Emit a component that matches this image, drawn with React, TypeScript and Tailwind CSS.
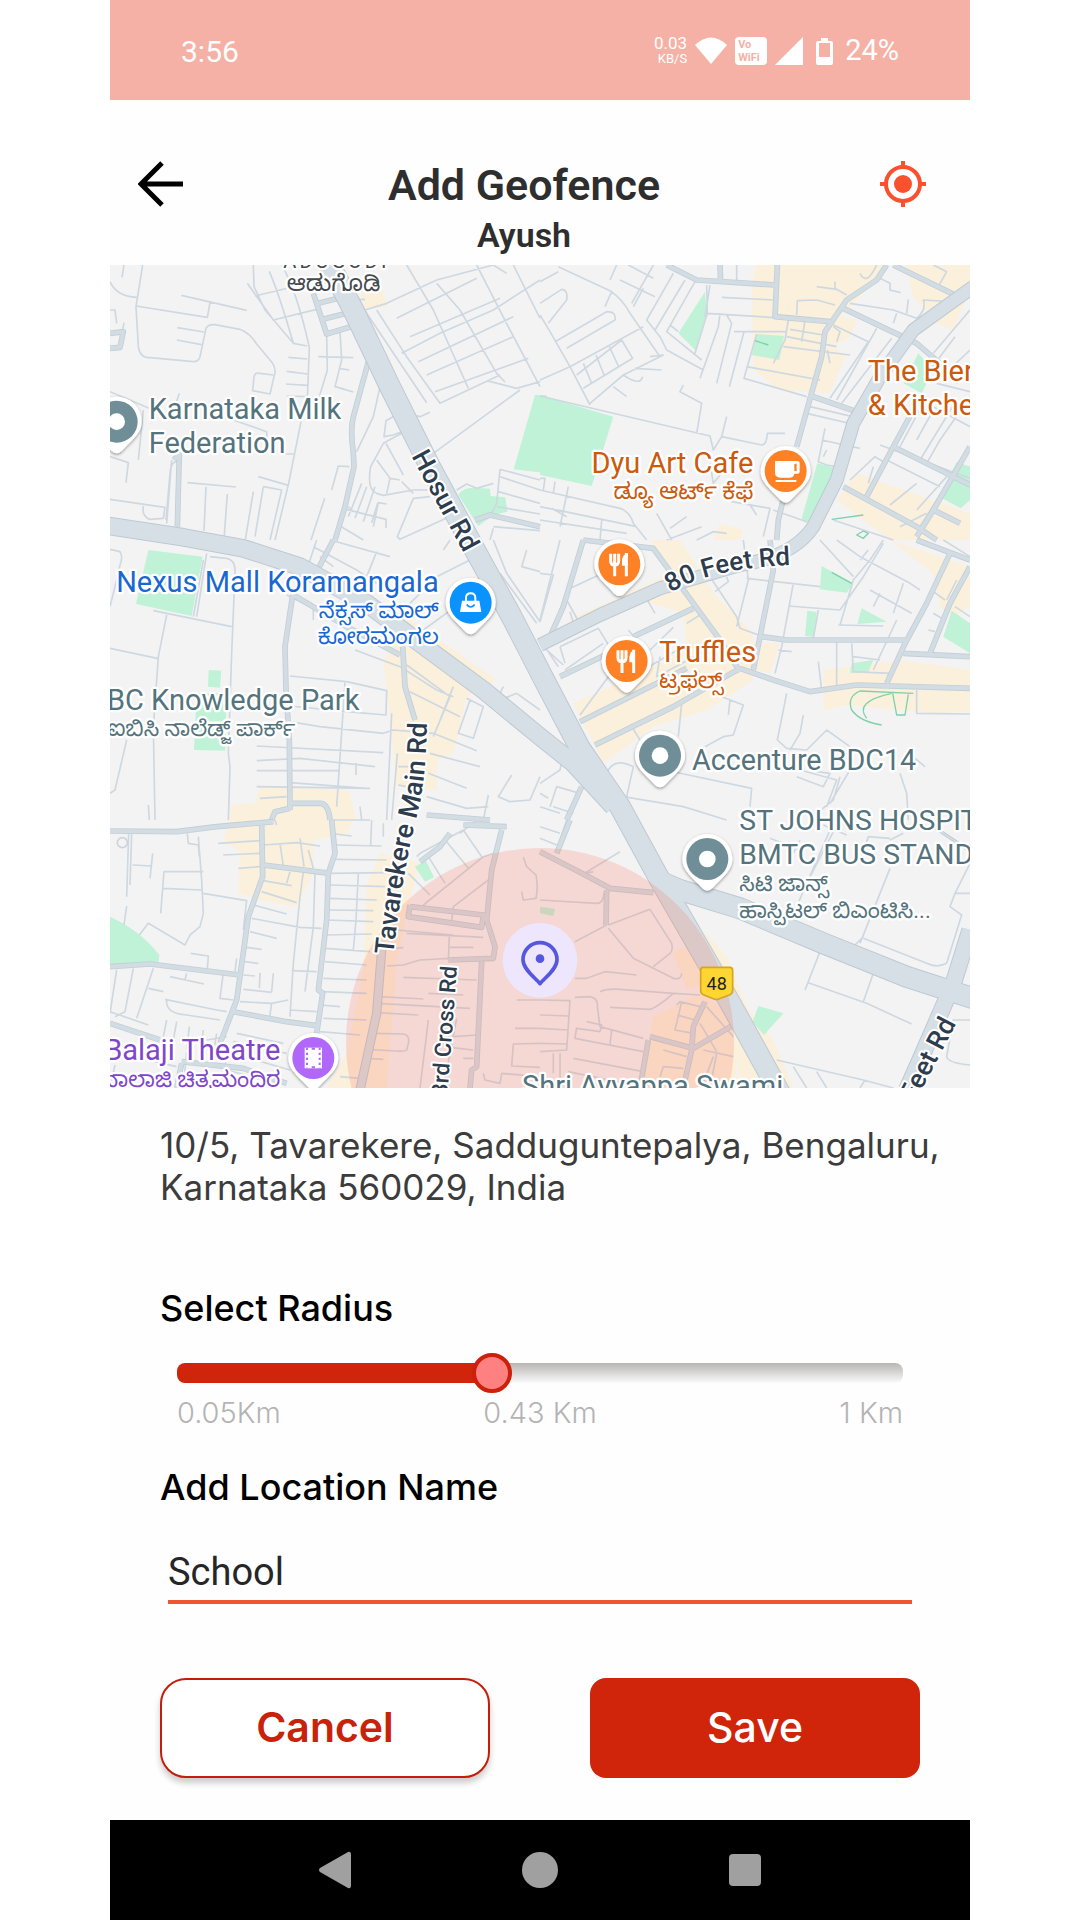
import React, { useState } from "react";

// Map drawing units are a third of a pixel, split into tiles of 1320 x 840.
interface Tile {
  x: number;
  y: number;
  sand: string[];
  parks: string[];
  minor: string;
  mid: string;
}

interface PinProps {
  x: number;
  y: number;
  color: string;
  children?: React.ReactNode;
}

interface LabelProps {
  x: number;
  y: number;
  color: string;
  size?: number;
  end?: boolean;
  children: React.ReactNode;
}

const TILES: Tile[] = [
  {
    x: 0,
    y: 0,
    sand: ["M780 80L850 90L860 140L790 150Z"],
    parks: [
      "M1305 405L1340 405L1340 640L1241 628Z",
      "M1075 705Q1090 680 1130 684L1170 686L1172 708L1216 712L1222 755L1180 765L1135 798Z",
    ],
    minor:
      "M72 15L66 52M30 65Q50 110 110 112M30 150L45 150L50 190M72 188L66 220M30 395L160 450M30 590L85 608L78 668M130 450L115 600M244 106L440 151M330 128L322 172L108 138M128 15L108 140L115 260Q120 295 150 293L280 305Q296 305 300 290L318 205Q325 192 345 194L420 208Q450 220 470 252L518 310Q530 330 522 350L510 402L458 392L462 350Q465 336 480 340L520 345M232 203L312 216M230 240L305 254M460 15L462 80L495 150L580 250L622 258M508 34Q540 110 580 250M545 15Q590 90 628 262L622 420M442 70L520 180L650 148M465 108L590 78M565 292L622 297M560 334L622 342M558 372L622 376M560 408L622 410M680 225L682 330L655 420M720 215L725 300L705 380L760 396M655 290L760 293M716 325L748 330M705 380L735 388M640 410L606 470L566 670L525 840M550 582L580 582M238 400L228 430M400 480L500 515L502 570M240 590L232 800M215 600L200 790M230 605Q212 606 210 640L198 780M262 668L408 681M318 680L312 812M382 702L372 838M460 695L436 838M475 650L565 676M490 680L545 690L510 840M490 680L465 830M30 718L195 742L190 775L150 778Q125 770 130 738M674 715L633 840M748 620L715 618L695 690M745 740L760 755M785 670L745 770M800 680L765 775M825 680L790 785M833 730L815 788M860 732L835 728L820 800M738 748L858 778L858 804M724 800L790 840M840 380L820 470L770 575M990 457L960 470L900 458L858 482L852 530L880 525L912 512M908 518L850 550L812 620Q800 690 830 700L850 706L940 690L990 690M830 600L870 655L900 660M858 550L910 645M870 655L860 700M905 665L940 700M990 710L940 715L892 830L900 838L1060 765M795 152L980 428M830 150L920 290L1020 430L1200 345M905 280L1020 220L1180 150L1320 60M760 120L795 118M795 150L860 130L1010 60L1180 15M1010 70L1080 150L1190 340L1215 366M920 15L1000 150L1105 385M1130 15L1230 210L1320 380M1240 15L1320 175M890 175L1130 55M930 230L1200 115M955 305L1240 170M980 345L1240 230M1005 395L1285 295M1160 362L1250 385L1320 365M1260 390L1000 580M1180 15L1220 40M1180 670L1130 685L1100 672L1070 690M1200 628L1190 730L1170 770M1200 628L1320 660M1200 650L1320 690M1195 695L1320 730M1190 740L1320 762M1180 800L1320 812M1180 805L1170 840",
    mid: "M640 100L680 222L760 198M655 130L715 115M668 178L740 160M805 305L760 470Q750 510 760 580L762 620L735 740L705 840M1125 780L1170 765L1320 800M30 265L60 262L70 215L30 220M222 600L238 580L232 800",
  },
  {
    x: 1320,
    y: 0,
    sand: [
      "M648 15L1035 15L990 80L900 170L950 180L930 230L880 260L915 290L870 400L720 390L640 330L635 90Z",
      "M1100 15L1290 15L1290 90L1240 210L1190 190L1120 110Z",
      "M950 640L1290 760L1290 840L1050 840L890 720Z",
      "M540 790L610 810L600 840L520 840Z",
      "M1240 15L1290 15L1290 60Z",
    ],
    parks: [
      "M0 405L220 470L155 678L0 645Z",
      "M495 95L500 160L468 272L415 220Z",
      "M650 222L732 228L718 300L635 285Z",
      "M832 610L890 625L848 720L805 795L785 775Z",
      "M1250 605L1290 620L1290 720L1262 745L1198 710Z",
      "M1135 280L1180 330L1145 400L1090 370Z",
    ],
    minor:
      "M0 65L55 35M55 20L210 92Q250 120 270 160L360 290M0 165L30 215L90 320L150 435M0 130L65 88Q85 90 80 120L25 190M45 245L200 155Q230 155 225 180L80 265M0 360L90 320L310 200M110 345L245 240L278 295L130 385M130 310L155 370M168 285L192 345M208 260L235 318M330 290L370 285L250 345L150 430M285 325L365 330M250 345Q300 380 308 350M220 380L260 410M210 92L215 95L195 140M230 15L210 60M240 60L345 110M310 85L280 140M265 15L340 55M340 15L275 130M400 40L320 180L360 230L380 270L490 330M435 60L345 210M465 65L380 215L485 300M390 195L415 215M500 75L502 160L465 280M510 75L495 170M540 160L535 200L480 355M560 165L575 190L530 370M612 215L568 380M582 215L740 215M590 15L590 65M500 160L740 175M545 112L700 120M650 222L612 355L800 410M745 180L735 240L700 310M740 230L890 260M620 320L840 360M730 260L930 285M795 180L785 245M750 208L850 225M862 270L870 310M770 165L772 122L830 120L885 135M830 80L890 88L920 105M885 65L885 90M880 200L900 215L890 245M880 195L985 245L870 415M1010 205L890 420M1055 235L905 430M1125 195L1100 225M960 40Q980 80 1010 15M1010 50L1050 70L1050 90L1082 98M930 130L1060 150L1130 175Q1160 150 1150 120L1230 125M1105 118L1100 160M1070 160L1060 190M1180 15L1220 35L1195 80M1290 150L1180 280M1245 230L1155 350M1290 270L1210 345M1290 330L1250 370M1290 395L1190 370M1290 500L1180 440M1250 420L1140 600M1160 410L1080 560M1280 425L1200 540L1160 610M1180 450L1130 540M0 408L510 528L520 570L545 530L665 555Q680 555 682 520L735 520M470 520L485 430L420 395L430 375M545 530L560 470M510 610L520 670L545 640M0 655L15 655L10 690M45 665L40 700M85 680L60 800M0 690L240 745Q270 755 280 790L320 840M35 745L80 770M0 740L75 755L290 800M185 780L180 840M0 780L260 820M350 760L395 840M440 770L390 805M485 800L380 840M560 820L520 815L470 840M575 725L690 745L670 830M630 735L650 765M800 460L950 495M810 440L960 475M855 505L835 605L860 615L890 620M845 540L960 565M860 570L850 590M930 660L1005 590L1030 605M1000 620L985 670M1020 555L1290 655M1040 600L1200 680M1130 670L1050 735M1200 705L1140 800M1220 650L1130 750M1160 760L1080 800M880 780L1060 840M700 750L800 785",
    mid: "M540 15L542 65M380 15L470 60L705 75M712 15L705 170L870 185M1040 15L1010 60L920 120L855 215L845 290L770 560M1060 15L1255 110M910 145L1130 250L1200 310M805 405L970 462M760 590L715 780L710 840M910 680L1130 800L1190 840M1120 450L1060 560L980 710M1060 560L1290 675M1290 560L1180 750L1130 830M1180 750L1260 790",
  },
  {
    x: 0,
    y: 840,
    sand: [
      "M920 230L1190 420L1100 470L1060 640L1010 660L1010 750L890 740L865 480L850 370Z",
      "M480 740L745 750L770 840L390 840L390 795L465 790Z",
    ],
    parks: [
      "M145 30L308 50L275 228L108 192Z",
      "M326 390L364 392L360 443L324 440Z",
      "M290 460L380 460L376 632L282 630Z",
    ],
    minor:
      "M30 28L60 35Q70 50 60 75L50 120L30 200M320 40L290 230M330 50L380 55Q408 60 405 100L395 340L385 640L390 680L385 840M310 60L280 230M160 212L395 260M200 225L175 350L160 560L165 840M30 325L172 355M80 600L45 750L30 760M560 165L640 205L640 240M620 90L650 0M690 0L870 50M640 20L770 90L830 130M660 50L700 80M830 35L800 110M1120 55L1010 110M1180 0L1220 100L1320 245M1280 30L1265 80L1320 95M1030 30L1050 0M1200 100L1310 250M930 190L960 160M970 270L1080 190M765 330L900 380L1010 450L1060 470M570 408L740 425L860 452L858 525L740 515L570 498M735 428L710 800M570 545L660 560L850 580L880 570L1000 580L1130 632M920 375L1050 470L1000 590M930 455L1080 530M1110 480L1075 580L1120 595L1150 500L1100 475M1060 440L1020 540M470 618L850 638M470 662L600 655L825 680M470 692L720 692M768 670L768 705M470 740L810 745M480 775L560 770M570 728L800 745M875 520L860 840M892 640L875 840M780 800L785 840M990 640L1140 680M985 700L1100 745M895 680L925 680M895 735L920 740M980 770L1100 805L1165 800M1235 705L1195 770L1230 785L1290 780L1320 710M1165 765L1150 840M1200 480L1250 460L1320 510M1235 500L1320 560M1210 440L1190 480M145 795L148 840",
    mid: "M578 165L555 320L558 450L568 600L570 810M908 320L915 440L945 540M515 840L525 815L570 805M570 790L660 790Q685 790 690 840M655 85L700 0M580 165L740 260L900 345M980 825L1170 840",
  },
  {
    x: 1320,
    y: 840,
    sand: [
      "M330 0L420 0L520 160L640 280L640 420L500 510L340 560L190 670L100 490L300 400L440 330L430 220L300 180L60 250L220 180L390 100Z",
      "M640 310L720 310L690 400L650 390Z",
      "M850 390L1080 360L1290 390L1290 515L1180 520L920 495L850 510Z",
      "M1050 0L1290 80L1290 200L1240 230L1200 200L1180 100Z",
    ],
    parks: [
      "M845 78L940 130L920 158L840 148Z",
      "M802 212L830 216L822 290L795 288Z",
      "M965 205L1040 245L952 252Z",
      "M1235 212L1290 250L1290 340L1210 290Z",
      "M935 370L1000 360L985 395L930 400Z",
    ],
    minor:
      "M0 100L40 105L0 245M60 0L30 120L0 240M130 0L40 270M80 180L130 270M80 150L220 85M90 215L110 280M60 320L175 265L215 330M60 320L75 370M15 325L70 375M25 335L55 380M310 160L345 220M265 270L290 300M400 262L330 330M430 320L240 430M440 250L480 225M360 350L350 410L520 320M250 350L120 525M190 310L75 390M510 110L590 230L600 265L670 290M525 155L565 125L560 110M590 260L625 120L610 0M620 115L840 140M760 130L725 320L705 400M745 198L900 210M835 210L820 295M900 255L940 120L990 60L1030 0M895 255L1030 258M890 0L960 50L1110 130L1140 150M840 0L940 110M990 150L1115 220M960 60L985 30M1020 160L1000 200M1090 130L1060 220M1070 240L1000 390M1030 10L970 110L900 210M935 310L940 395L1050 400M890 305L890 440M940 350L1020 360M715 330L755 335M835 365L845 450M1130 450L1130 520L1290 522M1180 155L1215 180M1180 220L1205 235M1210 0L1290 50M1165 270L1185 275M1250 120L1220 180M1245 200L1290 230M740 460L712 600L740 625L800 630L860 570L930 620M790 525L780 580L750 630M545 470L610 495L580 585L550 590L495 620M570 480L565 525M425 490L415 590M275 560L300 600M260 770L280 680Q220 650 200 700M375 690L635 745L630 800M250 770L430 800L560 840M0 730L60 690L70 640M30 800L50 740L120 760M0 800L60 820M0 760L25 775M770 710L850 740L870 700L830 695M780 690L890 720L860 800M870 790L930 690M1080 700L1100 760L1105 840M1130 680L1125 655L1155 680M900 710L880 780L830 820M40 800L100 820",
    mid: "M30 290L70 200L130 0M130 0L340 25L460 190L540 300M280 290L460 205M60 410L290 300M120 545L330 440L440 385M165 615L400 500L600 385M600 385L700 420L810 455L950 435L1290 445M640 390L700 90L690 0M665 290L740 300L1100 300L1040 430M1230 40L1160 190L1090 320M1290 80L1230 190L1170 340M1090 340L1290 350M1130 0L1290 60M125 740L80 840M600 395L540 300",
  },
  {
    x: 0,
    y: 1680,
    sand: [
      "M390 0L760 0L740 40L640 60L640 160L590 260L480 240L415 220L420 95L370 60Z",
      "M840 100L960 130L930 240L890 420L880 560L860 804L680 804L740 700L790 450L800 200Z",
    ],
    parks: ["M30 290Q120 330 178 405L175 432L30 440Z", "M945 140L978 122L1002 172L975 185Z"],
    minor:
      "M95 40L90 195M86 40L80 230M98 135L155 138M158 100L150 175M80 258L72 315M295 50L305 180L310 280L300 320L270 345L255 375L145 310L118 345M262 40L265 70L295 75L298 110M310 155L192 155L182 280M188 205L305 210M310 220L440 242M355 70L480 62M370 105L480 100M415 145L480 140M525 0L530 15M490 75L590 68L660 78M540 70L550 140M600 55L612 140M625 90L640 145M570 155L560 190M490 182L575 197M485 215L590 248M460 255L560 282M455 295L600 322L665 325M450 335L530 355M440 382L485 388M435 425L475 430M610 155L600 230L580 430L570 590M645 160L640 320L615 515M430 465L465 468M480 458L478 505M520 460L515 515M430 508L515 517M575 452L650 455M565 540L515 550L420 545M570 570L650 575M515 548L508 600M272 400L325 408L322 445M210 470L312 492M260 460L255 480M410 415L405 455M370 458L360 535L400 540M195 538L350 570L380 575M200 540Q195 580 260 585L360 600M50 450L30 580M100 445L75 575L45 590M160 445L110 595M145 505L190 515M30 575L145 615M200 600L190 650M230 605L220 660M268 620L260 690M310 630L300 700M350 640L340 700M690 0L810 0M815 0L812 75M850 10L850 50M705 42L755 48M700 75L845 78M705 118L860 120M690 160L860 158M690 195L855 200M685 235L830 240M685 270L820 272M680 300L820 305M680 345L815 342M676 385L810 395M675 425L800 435M670 475L800 480M665 515L800 520M660 555L720 560M670 595L800 600M660 635L780 645M775 160L768 300L760 390M440 240L430 330M260 695L250 804M380 690L370 800M400 665L560 700M395 700L570 750M410 640L550 670M380 750L530 790M380 650L320 660M230 740L60 700M45 735L30 804M720 770L780 775M925 160L990 225M985 110L1035 190M1040 65L1105 145M1090 30L1145 110M1090 30L960 100L950 110M1130 0L1080 40M920 340L1150 352M890 330L1060 345M1048 350L1045 420M1050 382L1120 382M860 438L910 435L960 420L1045 415M880 385L910 383M910 472L1130 480M985 520L1090 525M835 530L970 537M830 550L1110 565M830 578L955 585M985 600L960 804M1070 595L1030 804M825 640L910 642Q930 645 925 670L920 690Q915 695 890 693L800 688M1060 650L1130 645M1050 682L1120 690M1270 112L1280 140L1308 165Q1315 200 1308 235L1270 240L1265 215M1250 540L1320 540M1245 625L1320 625M1320 670L1240 672L1235 738L1320 742M1150 760L1155 780L1200 790L1205 760L1320 770M970 255L1150 110L1185 98M1055 305L1060 260L1165 180M1120 715L1090 715M800 715L850 718",
    mid: "M30 33L230 35L350 20L520 5M485 15L488 170L445 290L410 540L360 670M490 135L690 160M695 0L705 100L685 160L680 300L655 510L668 520L650 640M30 440L150 432L420 465M400 575L560 605L650 617M30 610L180 660M1205 30L1175 150L1160 300L1185 380L1180 415L1045 420M1145 425L1130 740L1115 750L1110 804M930 255L925 290L1145 322L1150 285L930 260M1100 15L1170 15M1050 40L1020 80L960 125M230 804L245 730M245 725L430 745L560 790M1090 15L1220 20",
  },
  {
    x: 1320,
    y: 1680,
    sand: [
      "M500 340L560 410L620 560L700 660L760 804L600 804L580 600L520 480L440 510L400 400Z",
      "M340 590L480 520L590 600L590 804L300 804Z",
    ],
    parks: ["M0 260L45 266L40 288L0 280Z", "M655 558L730 580L672 645L638 605Z"],
    minor:
      "M80 0L50 90M0 20L60 40M0 55L50 75M240 95L130 162L160 155M0 240L170 250Q190 250 192 220L200 210M200 315L105 365M205 315L330 268L395 370Q400 390 390 400L340 440M205 325L280 415L340 445L400 475Q425 480 425 460M290 465L195 455L140 475L105 475M180 515Q200 505 240 508L400 520L480 525M210 562L330 568Q355 560 400 520M0 540L90 542L80 690L0 695M0 585L85 588M0 625L85 630M0 670L80 672M105 532L150 530Q175 535 172 560L180 620L310 655M110 622L105 655L310 695M110 625L180 635L185 615L140 605M215 630L210 675M60 700L60 800M40 700L40 760M100 715L310 755M85 755L300 800M410 555L420 545L480 560M425 545L405 630L460 640M412 585L465 600M500 560L580 650M480 610L530 695M490 690L580 710M520 710L490 790M370 690L440 710M360 770L370 740L430 745M530 700L510 804M840 395L795 510M805 488L980 550L1115 612M1000 460L970 545M690 55L780 90M780 60L760 100M870 30L770 260M880 35L800 190M920 45L850 15M975 80L985 50L1050 55M1050 145L960 370M1090 40L1050 60M1290 130L1245 220L1230 260L1265 285L1220 430Q1190 445 1160 430L970 355M1245 220L1290 220M945 375L970 350M1290 600L1240 600L1220 710Q1225 730 1290 735M710 720L970 780L1060 804M760 740L800 804M830 755L860 804M975 780L960 804",
    mid: "M0 95L130 162L210 205L340 218M200 210L198 315M50 100L90 0M495 545L460 620L455 690L430 804M330 650L460 685L580 615M325 660L300 804",
  },
];

const HIGHWAYS = [
  { d: "M690 15L760 150L870 380L990 620L1130 880L1235 1070L1330 1255L1440 1465L1560 1640L1680 1860L1830 2120L1930 2300L2040 2500", w: 66 },
  { d: "M20 797L250 832L430 865L600 920L800 1030L960 1150L1150 1290L1320 1430L1420 1510L1540 1640", w: 56 },
  { d: "M1670 1860L1740 1890L1920 1945L2170 2050L2420 2150L2620 2215", w: 66 },
  { d: "M1320 1155L1500 1065L1680 985L1920 915Q2080 890 2140 800L2210 660L2260 490L2340 350L2440 210L2620 80", w: 42 },
  { d: "M2610 2010L2560 2170L2460 2400L2420 2490", w: 52 },
  { d: "M845 2070L830 2260L780 2490", w: 28 },
  { d: "M2500 1700L2620 1780", w: 10 },
];

const Pin: React.FC<PinProps> = ({ x, y, color, children }) => (
  <g transform={`translate(${x} ${y})`}>
    <path
      d="M-75 0A75 75 0 1 1 75 0C75 34 48 52 15 88Q0 102-15 88C-48 52-75 34-75 0Z"
      fill="#fff"
      filter="url(#pinShadow)"
    />
    <circle r="63" fill={color} />
    {children || <circle r="25" fill="#fff" />}
  </g>
);

const Fork = () => (
  <g fill="none" stroke="#fff" strokeWidth="9">
    <path d="M-26-32V-10Q-26 2-14 2T-2-10V-32M-14-32V36" />
    <path d="M21-34V36" />
    <path d="M8 4V-12Q10-30 25-34V4Z" fill="#fff" stroke="none" />
  </g>
);

const Label: React.FC<LabelProps> = ({ x, y, color, size = 87, end, children }) => (
  <text
    x={x}
    y={y}
    fontSize={size}
    fill={color}
    textAnchor={end ? "end" : "start"}
    stroke="#fff"
    strokeWidth="14"
    strokeLinejoin="round"
    paintOrder="stroke"
  >
    {children}
  </text>
);

const GeofenceMap = () => (
  <svg
    viewBox="30 15 2580 2469"
    role="img"
    aria-label="Map"
    className="block w-full h-auto bg-[#f4f3f4] font-['Roboto','Noto_Sans_Kannada','Noto_Sans',sans-serif]"
  >
    <defs>
      <filter id="pinShadow" x="-30%" y="-30%" width="160%" height="160%">
        <feDropShadow dx="0" dy="4" stdDeviation="5" floodOpacity="0.4" />
      </filter>
      <path id="hosur" d="M934 588L1162 1010" />
      <path id="feet80" d="M1712 998Q1830 922 2100 914" />
      <path id="tavarekere" d="M880 2085Q905 1850 952 1660Q980 1560 982 1340" />
      <path id="cross3" d="M1042 2510L1074 2080" />
      <path id="feetRd" d="M2444 2530L2600 2230" />
    </defs>

    {TILES.map((t) => (
      <g key={`area-${t.x}-${t.y}`} transform={`translate(${t.x} ${t.y})`}>
        {t.sand.map((d) => (
          <path key={d} d={d} fill="#faf0db" />
        ))}
        {t.parks.map((d) => (
          <path key={d} d={d} fill="#bff2d6" />
        ))}
      </g>
    ))}
    {TILES.map((t) => (
      <g key={`road-${t.x}-${t.y}`} transform={`translate(${t.x} ${t.y})`} fill="none" strokeLinejoin="round">
        <path d={t.minor} stroke="#ced8e0" strokeWidth="5" />
        <path d={t.mid} stroke="#c3ced7" strokeWidth="17" />
        <path d={t.mid} stroke="#d2dce3" strokeWidth="12" />
      </g>
    ))}
    <g fill="none" strokeLinejoin="round">
      {HIGHWAYS.map((h) => (
        <path key={h.d} d={h.d} stroke="#bdc9d2" strokeWidth={h.w} />
      ))}
      {HIGHWAYS.map((h) => (
        <path key={h.d} d={h.d} stroke="#d6dfe5" strokeWidth={h.w - 6} />
      ))}
      <g stroke="#7fd0ab" strokeWidth="4">
        <path d="M2440 1300L2280 1293Q2240 1310 2255 1350Q2280 1385 2345 1395M2375 1300Q2260 1325 2300 1375M2378 1300L2390 1365L2415 1365L2425 1303" />
        <path d="M2195 778L2290 765M2270 825L2290 813L2305 820L2290 835ZM2195 937L2255 970M1965 242L2005 255" />
      </g>
      <circle cx="67" cy="1748" r="15" stroke="#cbd5de" strokeWidth="5" />
    </g>

    {/* geofence radius */}
    <circle cx="1320" cy="2346" r="582" fill="#f87054" fillOpacity="0.2" />

    <Label x={550} y={25} color="#45494d" size={60}>
      <tspan letterSpacing="9">ADUGODI</tspan>
    </Label>
    <Label x={560} y={94} color="#45494d" size={68}>ಆಡುಗೊಡಿ</Label>

    <g fontWeight="500" fill="#2e3d4d" stroke="#fff" strokeWidth="12" strokeLinejoin="round" paintOrder="stroke" fontSize="80">
      <text><textPath href="#hosur">Hosur Rd</textPath></text>
      <text fontSize="78"><textPath href="#feet80">80 Feet Rd</textPath></text>
      <text><textPath href="#tavarekere">Tavarekere Main Rd</textPath></text>
      <text fontSize="68"><textPath href="#cross3">3rd Cross Rd</textPath></text>
      <text><textPath href="#feetRd">Feet Rd</textPath></text>
    </g>

    <Pin x={50} y={485} color="#708e98" />
    <Label x={146} y={478} color="#54737c">Karnataka Milk</Label>
    <Label x={146} y={580} color="#54737c">Federation</Label>

    <Label x={2303} y={363} color="#cc5a0c">The Bier</Label>
    <Label x={2303} y={466} color="#cc5a0c">&amp; Kitche</Label>

    <Pin x={2057} y={633} color="#ff8126">
      <path d="M-32-30H36Q42-30 42-24V2Q42 8 36 8H26Q24 20 12 20H-16Q-32 20-32 4ZM26-22V0H33V-22ZM-30 27H32V33H-30Z" fill="#fff" fillRule="evenodd" />
    </Pin>
    <Label x={1960} y={640} color="#cc5a0c" end>Dyu Art Cafe</Label>
    <Label x={1960} y={718} color="#cc5a0c" size={68} end>ಡ್ಯೂ ಆರ್ಟ್ ಕೆಫೆ</Label>

    <Pin x={1558} y={913} color="#ff8126"><Fork /></Pin>
    <Pin x={1580} y={1203} color="#ff8126"><Fork /></Pin>
    <Label x={1677} y={1206} color="#cc5a0c">Truffles</Label>
    <Label x={1677} y={1285} color="#cc5a0c" size={67}>ಟ್ರಫಲ್ಸ್</Label>

    <Pin x={1112} y={1028} color="#0a93ff">
      <path d="M-26-6H26L32 28H-32Z" fill="#fff" />
      <path d="M-14-4V-14Q-14-28 0-28T14-14V-4" fill="none" stroke="#fff" strokeWidth="6" />
      <path d="M-12 6Q0 20 12 6" fill="none" stroke="#0a93ff" strokeWidth="5" />
    </Pin>
    <Label x={1016} y={995} color="#1967d2" end>Nexus Mall Koramangala</Label>
    <Label x={1016} y={1075} color="#1967d2" size={67} end>ನೆಕ್ಸಸ್ ಮಾಲ್</Label>
    <Label x={1016} y={1153} color="#1967d2" size={66} end>ಕೋರಮಂಗಲ</Label>

    <Label x={778} y={1350} color="#54737c" end>BC Knowledge Park</Label>
    <Label x={586} y={1428} color="#54737c" size={66} end>ಐಬಿಸಿ ನಾಲೆಡ್ಜ್ ಪಾರ್ಕ್</Label>

    <Pin x={1680} y={1487} color="#708e98" />
    <Label x={1776} y={1531} color="#54737c" size={86}>Accenture BDC14</Label>

    <Pin x={1822} y={1797} color="#708e98" />
    <Label x={1918} y={1710} color="#54737c" size={85}>ST JOHNS HOSPITAL</Label>
    <Label x={1918} y={1812} color="#54737c" size={85}>BMTC BUS STAND</Label>
    <Label x={1918} y={1893} color="#54737c" size={66}>ಸಿಟಿ ಜಾನ್ಸ್</Label>
    <Label x={1918} y={1973} color="#54737c" size={66}>ಹಾಸ್ಪಿಟಲ್ ಬಿಎಂಟಿಸಿ...</Label>

    <path d="M1808 2122H1890Q1898 2122 1898 2132V2192Q1898 2200 1890 2204L1856 2217Q1849 2220 1842 2217L1810 2204Q1802 2200 1802 2192V2132Q1802 2122 1808 2122Z" fill="#fdd633" stroke="#d9a520" strokeWidth="5" />
    <text x="1850" y="2190" fontSize="54" textAnchor="middle" fill="#222">48</text>

    <Pin x={640} y={2394} color="#b267fb">
      <path d="M-26-31H26V31H-26Z" fill="#fff" />
      <path d="M-19-31V31M19-31V31" stroke="#b267fb" strokeWidth="6" strokeDasharray="7 8" />
      <path d="M-5-31H5V-25H-5ZM-5 25H5V31H-5Z" fill="#b267fb" />
    </Pin>
    <Label x={541} y={2400} color="#8046c9" end>Balaji Theatre</Label>
    <Label x={541} y={2480} color="#8046c9" size={66} end>ಬಾಲಾಜಿ ಚಿತ್ರಮಂದಿರ</Label>
    <Label x={1266} y={2507} color="#54737c">Shri Ayyappa Swami</Label>

    {/* selected location */}
    <circle cx="1320" cy="2101" r="112" fill="#ede6fc" />
    <path d="M1320 2171C1308 2155 1269 2129 1269 2099A51 51 0 0 1 1371 2099C1371 2129 1332 2155 1320 2171Z" fill="none" stroke="#5558dd" strokeWidth="11" strokeLinejoin="round" />
    <circle cx="1320" cy="2096" r="13" fill="#5558dd" />
  </svg>
);

const StatusBar = () => (
  <div className="flex h-[100px] items-center justify-between bg-[#f5b1a6] px-[71px] pt-[2px] font-['Roboto',sans-serif] text-white">
    <span className="text-[30px]">3:56</span>
    <div className="flex items-center gap-2">
      <div className="text-right text-[17px] leading-[16px]">
        <p>0.03</p>
        <p className="text-[13px]">KB/S</p>
      </div>
      <svg width="32" height="28" viewBox="0 0 32 28" fill="currentColor" aria-hidden="true">
        <path d="M0 8Q16-7 32 8L16 27Z" />
      </svg>
      <div className="h-7 w-8 rounded bg-white pl-[3px] pt-px text-[11px] font-bold leading-[13px] text-[#f5b1a6]">
        <p>Vo</p>
        <p>WiFi</p>
      </div>
      <svg width="28" height="28" viewBox="0 0 28 28" fill="currentColor" aria-hidden="true">
        <path d="M28 0V28H0Z" />
      </svg>
      <svg width="26" height="28" viewBox="6 0 20 28" fill="currentColor" fillRule="evenodd" aria-hidden="true">
        <path d="M13 1H20V4H23Q25 4 25 6V26Q25 28 23 28H10Q8 28 8 26V6Q8 4 10 4H13ZM11 6V20H22V6Z" />
      </svg>
      <span className="text-[29px]">24%</span>
    </div>
  </div>
);

const App: React.FC = () => {
  const [radius, setRadius] = useState(0.43);
  const [name, setName] = useState("School");

  return (
    <div className="min-h-screen bg-white">
      <div className="mx-auto flex w-full max-w-[860px] flex-col bg-[#fefefe] font-['Inter',sans-serif]">
        <StatusBar />

        <header className="flex h-[165px] items-start pl-[28px] pr-[36px] pt-[57px] font-['Roboto',sans-serif] text-[#2e2e2e]">
          <button aria-label="Back" className="pt-1 text-black">
            <svg width="46" height="46" viewBox="0 0 46 46" fill="none" stroke="currentColor" strokeWidth="5">
              <path d="M24 2L3 23L24 44M3 23H45" />
            </svg>
          </button>
          <div className="flex-1 pr-2 text-center">
            <h1 className="text-[43px] font-semibold leading-[56px]">Add Geofence</h1>
            <p className="text-[34px] font-semibold leading-[44px]">Ayush</p>
          </div>
          <button aria-label="My location" className="flex w-[62px] justify-center pt-1 text-[#f9502e]">
            <svg width="46" height="46" viewBox="0 0 46 46" fill="none" stroke="currentColor" strokeWidth="4">
              <circle cx="23" cy="23" r="17" />
              <circle cx="23" cy="23" r="9" fill="currentColor" stroke="none" />
              <path d="M23 0V7M23 39V46M0 23H7M39 23H46" />
            </svg>
          </button>
        </header>

        <GeofenceMap />

        <main className="px-[50px] pt-9">
          <p className="-mr-10 text-[35px] leading-[42px] text-[#3c3c3c]">
            10/5, Tavarekere, Sadduguntepalya, Bengaluru, Karnataka 560029, India
          </p>

          <label htmlFor="radius" className="mt-[79px] block text-[36px] font-medium leading-[42px] text-black">
            Select Radius
          </label>
          <div className="mt-6 px-[17px]">
            <input
              id="radius"
              type="range"
              min="0"
              max="1"
              step="0.01"
              value={radius}
              onChange={(e) => setRadius(Number(e.target.value))}
              style={{ "--fill": `${radius * 100}%` } as React.CSSProperties}
              className="block h-10 w-full cursor-pointer appearance-none bg-transparent [&::-webkit-slider-runnable-track]:h-5 [&::-webkit-slider-runnable-track]:rounded-lg [&::-webkit-slider-runnable-track]:bg-[linear-gradient(to_right,#d0250a_var(--fill),transparent_var(--fill)),linear-gradient(to_bottom,#b8b5b2,#fbfbfb)] [&::-webkit-slider-thumb]:-mt-[10px] [&::-webkit-slider-thumb]:size-10 [&::-webkit-slider-thumb]:appearance-none [&::-webkit-slider-thumb]:rounded-full [&::-webkit-slider-thumb]:border-4 [&::-webkit-slider-thumb]:border-[#cc200a] [&::-webkit-slider-thumb]:bg-[#ff8080]"
            />
            <div className="grid grid-cols-3 text-[29px] font-light leading-[40px] text-[#b4b4b4]">
              <span>0.05Km</span>
              <span className="text-center">{radius} Km</span>
              <span className="text-right">1 Km</span>
            </div>
          </div>

          <label htmlFor="location" className="mt-[33px] block text-[36px] font-medium leading-[42px] text-black">
            Add Location Name
          </label>
          <div className="mt-9 px-2">
            <input
              id="location"
              type="text"
              value={name}
              onChange={(e) => setName(e.target.value)}
              className="block h-[60px] w-full border-b-4 border-[#ee5530] bg-transparent font-['Roboto',sans-serif] text-[38px] text-[#262626] outline-none"
            />
          </div>

          <div className="mt-[74px] grid grid-cols-2 gap-[100px]">
            <button className="h-[100px] rounded-[26px] border-2 border-[#c41e0a] bg-white text-[41px] font-semibold text-[#c9220a] shadow-[0_5px_6px_rgba(0,0,0,0.2)]">
              Cancel
            </button>
            <button className="h-[100px] rounded-2xl bg-[#d0250a] text-[41px] font-medium text-white">Save</button>
          </div>
        </main>

        <nav className="mt-[42px] flex h-[100px] items-center justify-center gap-[165px] bg-black text-[#a0a0a0]">
          <button aria-label="Back" className="flex w-10 justify-center">
            <svg width="34" height="38" viewBox="0 0 34 38" fill="currentColor">
              <path d="M2 17L30 1Q33 0 33 4V34Q33 38 30 37L2 21Q0 19 2 17Z" />
            </svg>
          </button>
          <button aria-label="Home" className="flex w-10 justify-center">
            <span className="size-9 rounded-full bg-[#a0a0a0]" />
          </button>
          <button aria-label="Recent apps" className="flex w-10 justify-center">
            <span className="size-8 rounded bg-[#a0a0a0]" />
          </button>
        </nav>
      </div>
    </div>
  );
};

export default App;
